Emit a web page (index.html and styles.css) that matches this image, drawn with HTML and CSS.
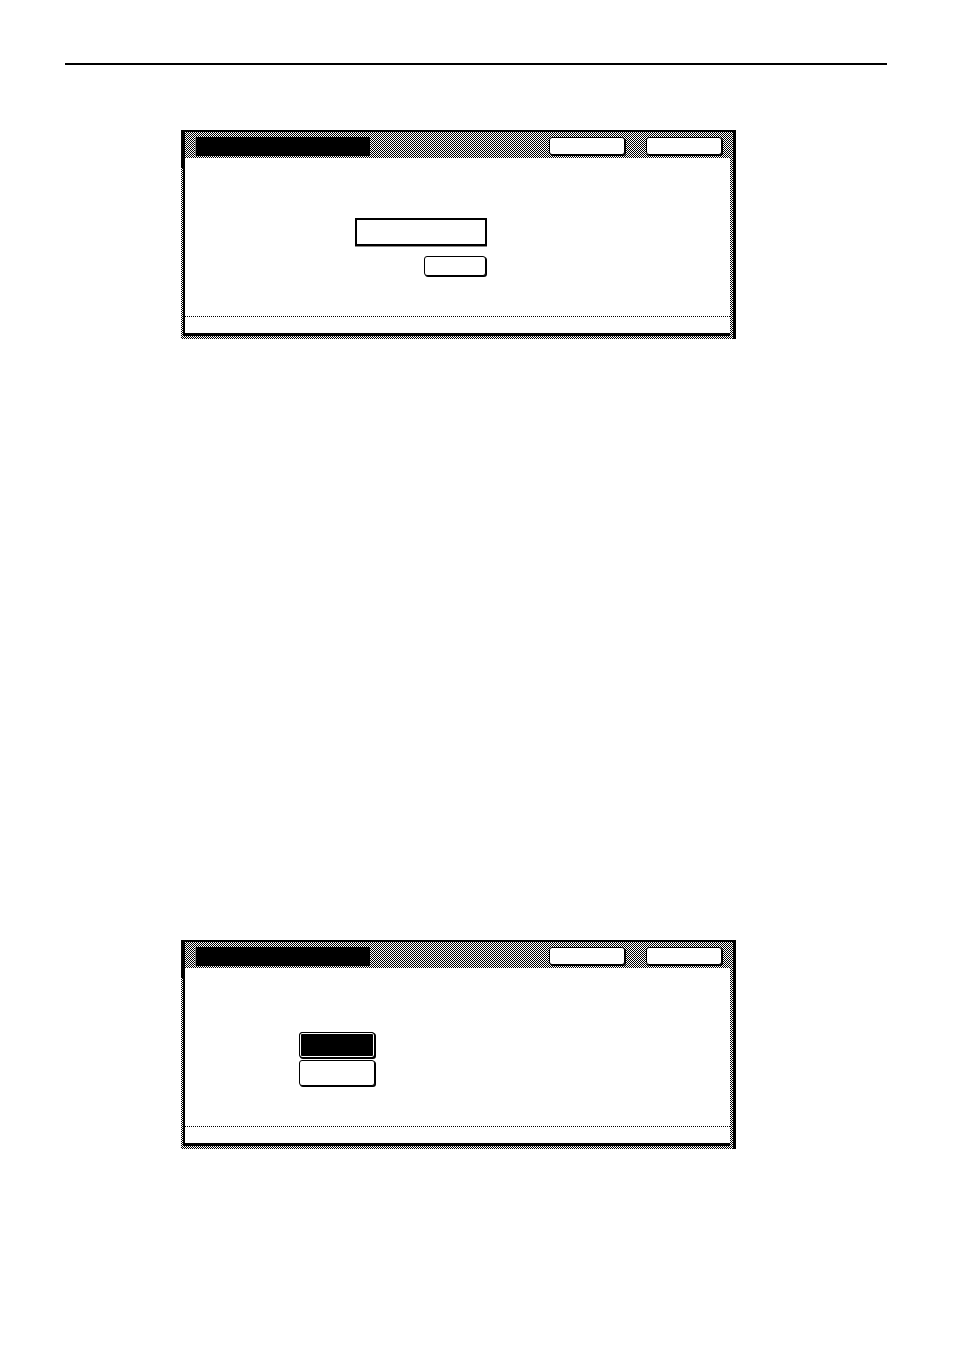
FILE: index.html
```html
<!DOCTYPE html>
<html>
<head>
<meta charset="utf-8">
<link rel="stylesheet" href="styles.css">
</head>
<body>
<div class="page">
  <div class="rule"></div>

  <div class="panel panel-first">
    <div class="titlebar">
      <div class="title-block"></div>
      <div class="title-buttons">
        <div class="tbtn"></div>
        <div class="tbtn"></div>
      </div>
    </div>
    <div class="content">
      <div class="main main-entry">
        <div class="entry-box"></div>
        <div class="small-btn"></div>
      </div>
      <div class="status"></div>
    </div>
  </div>

  <div class="panel panel-second">
    <div class="titlebar">
      <div class="title-block"></div>
      <div class="title-buttons">
        <div class="tbtn"></div>
        <div class="tbtn"></div>
      </div>
    </div>
    <div class="content">
      <div class="main main-choice">
        <div class="choice choice-on"></div>
        <div class="choice"></div>
      </div>
      <div class="status"></div>
    </div>
  </div>
</div>
</body>
</html>
```

FILE: styles.css
```css
html, body {
  margin: 0;
  padding: 0;
  background: #fff;
  font-family: "Liberation Sans", Arial, sans-serif;
}

.page {
  width: 954px;
  height: 1351px;
  padding-top: 63px;
  box-sizing: border-box;
}

.rule {
  margin-left: 65px;
  width: 822px;
  height: 2px;
  background: #000;
}

.panel {
  box-sizing: border-box;
  width: 555px;
  height: 209px;
  margin-left: 181px;
  border-top: 2px solid #000;
  border-right: 3px solid #000;
  padding: 0 3px 3px 2px;
  display: flex;
  flex-direction: column;
  background:
    linear-gradient(#000, #000) left top / 2px 36px no-repeat,
    repeating-conic-gradient(#000 0 25%, #fff 0 50%) 0 0 / 2px 2px;
}

.panel-first {
  margin-top: 65px;
}

.panel-second {
  margin-top: 601px;
}

.titlebar {
  height: 26px;
  flex: none;
  border-left: 2px solid #000;
  display: flex;
  align-items: flex-start;
  justify-content: space-between;
  padding: 5px 8px 0 10px;
  box-sizing: border-box;
  background: repeating-conic-gradient(#000 0 25%, #fff 0 50%) 0 0 / 2px 2px;
}

.title-block {
  width: 174px;
  height: 19px;
  background: #000;
  border-left: 1px solid #777;
}

.title-buttons {
  display: flex;
  gap: 21px;
}

.tbtn {
  width: 74px;
  height: 16px;
  background: #fff;
  border: 1px solid #000;
  border-radius: 3px;
  box-shadow: 1px 1px 0 #000;
}

.content {
  flex: 1;
  display: flex;
  flex-direction: column;
  background: #fff;
  border-left: 2px solid #000;
  border-bottom: 3px solid #000;
}

.main {
  flex: 1;
  display: flex;
  flex-direction: column;
  align-items: flex-start;
}

.main-entry {
  padding: 60px 0 0 170px;
}

.entry-box {
  width: 128px;
  height: 24px;
  border: 2px solid #000;
  box-shadow: 0 1px 0 #888;
}

.small-btn {
  margin: 10px 0 0 69px;
  width: 60px;
  height: 18px;
  border: 1px solid #000;
  border-radius: 3px;
  box-shadow: 1px 1px 0 #000;
  background: #fff;
}

.main-choice {
  padding: 64px 0 0 114px;
  gap: 2px;
}

.choice {
  width: 74px;
  height: 24px;
  border: 1px solid #000;
  border-radius: 3px;
  box-shadow: 1px 1px 0 #000;
  background: #fff;
}

.choice-on {
  background: #000;
  border-color: #000;
  box-shadow: 1px 1px 0 #000, inset 0 0 0 1px #fff, inset 0 0 0 2px #000;
}

.status {
  height: 16px;
  flex: none;
  border-top: 1px dotted #000;
}
```
